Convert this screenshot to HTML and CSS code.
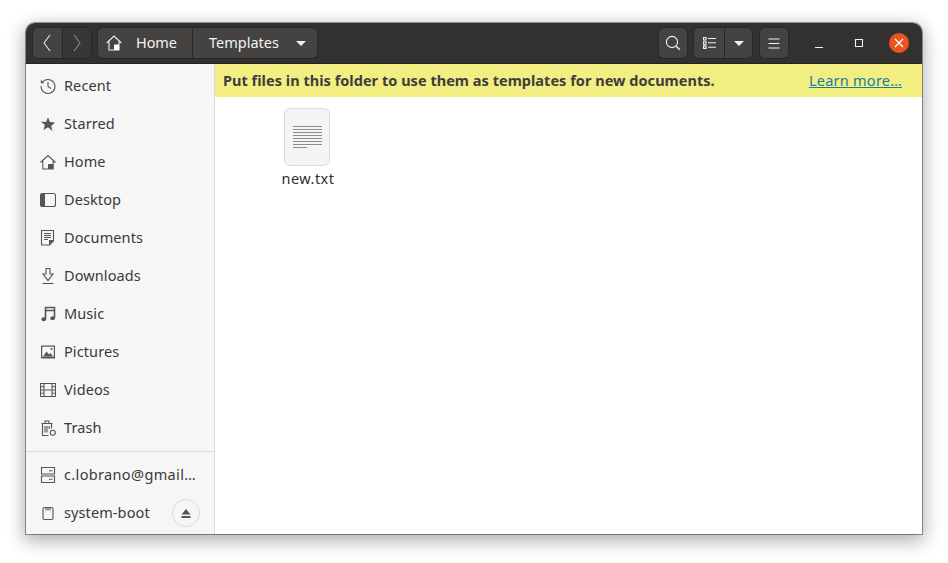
FILE: index.html
```html
<!DOCTYPE html>
<html lang="en">
<head>
<meta charset="utf-8">
<title>Templates</title>
<link rel="stylesheet" href="styles.css">
</head>
<body>
<div class="window">
  <header class="headerbar">
    <div class="group nav">
      <button class="btn nav-btn"><svg width="16" height="20" viewBox="0 0 16 20"><path d="M11 2 5 10l6 8" class="st-w"/></svg></button>
      <button class="btn nav-btn off"><svg width="16" height="20" viewBox="0 0 16 20"><path d="M5 2l6 8-6 8" class="st-g"/></svg></button>
    </div>
    <div class="group path">
      <button class="btn crumb home">
        <svg width="16" height="16" viewBox="0 0 16 16"><path d="M.7 8 8 1l7.300 7M3 6.500V15h10V6.500" class="st-w1"/><rect x="8" y="9.500" width="5" height="5.500" fill="#fff"/></svg>
        <span>Home</span>
      </button>
      <button class="btn crumb cur">
        <span>Templates</span>
        <i class="caret"></i>
      </button>
    </div>
    <div class="spacer"></div>
    <button class="btn solo"><svg width="16" height="16" viewBox="0 0 16 16"><circle cx="7" cy="7" r="5.600" class="st-w1"/><path d="m11.200 11.200 3.600 3.600" stroke="#eee" stroke-width="1.600" fill="none"/></svg></button>
    <div class="group view">
      <button class="btn view-a"><svg width="13" height="12" viewBox="0 0 13 12"><path d="M.5.5h2.500V3H.5zM.5 4.700h2.500v2.500H.5zM.5 8.900h2.500v2.500H.5z" class="st-w1"/><path d="M5 1.500h8M5 5.800h8M5 10.200h8" class="st-w1"/></svg></button>
      <button class="btn view-b"><i class="caret"></i></button>
    </div>
    <button class="btn solo menu"><svg width="12" height="11" viewBox="0 0 12 11"><path d="M.5 1h11M.5 5.500h11M.5 10h11" class="st-w1"/></svg></button>
    <div class="wm">
      <span class="wm-btn"><svg width="10" height="10" viewBox="0 0 10 10"><path d="M1 9.500h8" class="st-w1"/></svg></span>
      <span class="wm-btn"><svg width="10" height="10" viewBox="0 0 10 10"><path d="M1.500 1.500h7v7h-7z" class="st-w1"/></svg></span>
      <span class="wm-btn close"><svg width="10" height="10" viewBox="0 0 10 10"><path d="m1 1 8 8M9 1 1 9" stroke="#fff" stroke-width="1.300" fill="none"/></svg></span>
    </div>
  </header>
  <div class="body">
    <aside class="sidebar">
      <ul class="places">
        <li class="place"><svg class="ic" width="16" height="16" viewBox="0 0 16 16"><path d="M2.200 4.500A7 7 0 1 1 1 8" class="st-d"/><path d="M.8 1.800v3.400h3.400z" fill="#555"/><path d="M8 4v4.500l3 2" class="st-d"/></svg><span>Recent</span></li>
        <li class="place"><svg class="ic" width="16" height="16" viewBox="0 0 16 16"><path d="m8 1.200 2 4.900 5.200.4-4 3.400 1.300 5.100L8 11.200l-4.500 2.800 1.300-5.100-4-3.400L6 6.100z" fill="#555"/></svg><span>Starred</span></li>
        <li class="place"><svg class="ic" width="16" height="16" viewBox="0 0 16 16"><path d="M.5 8.500 8 1.500l7.500 7M2.800 6.500V15h10.400V6.500" class="st-d"/><rect x="8" y="10" width="5" height="5" fill="#555"/></svg><span>Home</span></li>
        <li class="place"><svg class="ic" width="16" height="16" viewBox="0 0 16 16"><rect x=".5" y="1.500" width="15" height="13" rx="2" class="st-d"/><path d="M2.500 1.500h2.500v13H2.500a2 2 0 0 1-2-2v-9a2 2 0 0 1 2-2z" fill="#555"/></svg><span>Desktop</span></li>
        <li class="place"><svg class="ic" width="16" height="16" viewBox="0 0 16 16"><path d="M1.500 .5h12v10.500l-4 4h-8z" class="st-d"/><path d="M4 3.500h7M4 5.500h7M4 7.500h7M4 9.500h4" class="st-d"/><path d="M9 15v-5h5z" fill="#555"/></svg><span>Documents</span></li>
        <li class="place"><svg class="ic" width="16" height="16" viewBox="0 0 16 16"><path d="M6 .5h4v5.500h3L8 12.500 3 6h3z" class="st-d"/><path d="M2.500 15.500h11" class="st-d"/></svg><span>Downloads</span></li>
        <li class="place"><svg class="ic" width="16" height="16" viewBox="0 0 16 16"><path d="M5.500 13V1.500h9V12M5.500 4.500h9" stroke="#555" stroke-width="1.600" fill="none"/><ellipse cx="3.800" cy="13.300" rx="2.300" ry="2" fill="#555"/><ellipse cx="12.600" cy="12.300" rx="2.300" ry="2" fill="#555"/></svg><span>Music</span></li>
        <li class="place"><svg class="ic" width="16" height="16" viewBox="0 0 16 16"><rect x="1" y="1.500" width="14" height="13" fill="#555"/><rect x="2.200" y="2.700" width="11.600" height="10" fill="#f6f6f6"/><path d="m3 12.500 3.500-5 2.500 3 1.500-1.500 2.500 3.500z" fill="#555"/><circle cx="11.500" cy="5" r="1" fill="#555"/></svg><span>Pictures</span></li>
        <li class="place"><svg class="ic" width="16" height="16" viewBox="0 0 16 16"><path d="M.5 1.500h15v13H.5zM4 1.500v13M12 1.500v13M4 8h8M.5 4.800H4M.5 8H4M.5 11.200H4M12 4.800h3.500M12 8h3.500M12 11.200h3.500" class="st-d"/></svg><span>Videos</span></li>
        <li class="place"><svg class="ic" width="16" height="16" viewBox="0 0 16 16"><path d="M1.500 3.500h11M5 3V1h4v2M2.500 3.500v12h6M11.500 3.500v5M5 6v6.500M7 6v6.500M9.200 6v3" class="st-d"/><circle cx="12.800" cy="12.800" r="2.500" class="st-d"/></svg><span>Trash</span></li>
      </ul>
      <ul class="places devices">
        <li class="place"><svg class="ic" width="16" height="16" viewBox="0 0 16 16"><path d="M1.500 .5h13v6.500h-13zM1.500 9h13v6.500h-13zM9 3.800h3.500M9 12.200h3.500" class="st-d"/></svg><span class="acct">c.lobrano@gmail…</span></li>
        <li class="place"><svg class="ic" width="16" height="16" viewBox="0 0 16 16"><path d="M4.500 2.500h7a1.500 1.500 0 0 1 1.500 1.500v9a1.500 1.500 0 0 1-1.500 1.500h-7A1.500 1.500 0 0 1 3 13V4a1.500 1.500 0 0 1 1.500-1.500z" class="st-d"/><path d="M6 3v2.500M8 3v2.500M10 3v2.500" class="st-d"/></svg><span class="grow">system-boot</span>
          <span class="eject"><svg width="10" height="9" viewBox="0 0 10 9"><path d="M5 0 9.500 5.500H.5z M.5 7h9v2h-9z" fill="#555"/></svg></span></li>
      </ul>
    </aside>
    <main class="main">
      <div class="infobar">
        <strong>Put files in this folder to use them as templates for new documents.</strong>
        <a class="learn" href="#">Learn more…</a>
      </div>
      <div class="files">
        <div class="file">
          <div class="page"><div class="lines"><i></i><i></i><i></i><i></i><i></i><i></i><i></i><i class="short"></i></div></div>
          <span class="fname">new.txt</span>
        </div>
      </div>
    </main>
  </div>
</div>
</body>
</html>
```
FILE: styles.css
```css
* { box-sizing: border-box; }
html, body { margin: 0; height: 100%; }
body {
  background: #fff;
  padding: 23px 26px 29px;
  font-family: "Noto Sans", "Open Sans", sans-serif;
  font-size: 14.5px;
  color: #3d3d3d;
  overflow: hidden;
}
button { font: inherit; color: inherit; margin: 0; padding: 0; border: 0; background: none; display: flex; align-items: center; justify-content: center; }
ul { list-style: none; margin: 0; padding: 0; }
i { display: block; }
.window {
  width: 896px;
  height: 511px;
  display: flex;
  flex-direction: column;
  border-radius: 9px 9px 0 0;
  overflow: hidden;
  box-shadow: 0 0 0 1px rgba(0,0,0,.38), 0 5px 18px 2px rgba(0,0,0,.32);
  background: #fff;
}
.headerbar {
  height: 41px;
  flex: none;
  background: #333130;
  border-bottom: 1px solid #232221;
  display: flex;
  align-items: flex-start;
  padding: 5px 0 0 7px;
  color: #f2f2f2;
}
.st-w { stroke: #e8e8e8; stroke-width: 1.1; fill: none; }
.st-g { stroke: #8a8a88; stroke-width: 1.1; fill: none; }
.st-w1 { stroke: #f2f2f2; stroke-width: 1.1; fill: none; }
.st-d { stroke: #555; stroke-width: 1.1; fill: none; }
.group { display: flex; height: 30px; border-radius: 5px; box-shadow: 0 0 0 1px #292827; overflow: hidden; }
.btn { height: 30px; background: #454342; }
.nav { width: 58px; }
.nav-btn { flex: 1; }
.nav-btn + .nav-btn { border-left: 1px solid #2a2928; }
.nav-btn.off { background: #393736; }
.path { margin-left: 7px; width: 219px; }
.crumb span { margin-top: -2px; }
.home { width: 94px; justify-content: flex-start; padding-left: 8px; }
.home span { margin-left: 14px; letter-spacing: -.1px; }
.cur { flex: 1; border-left: 1px solid #2a2928; justify-content: flex-start; padding-left: 16px; }
.cur .caret { margin-left: 17px; }
.caret { width: 0; height: 0; border-left: 5px solid transparent; border-right: 5px solid transparent; border-top: 5px solid #f2f2f2; }
.spacer { flex: 1; }
.solo { width: 28px; border-radius: 5px; box-shadow: 0 0 0 1px #292827; }
.view { width: 58px; margin-left: 7px; }
.view-a { width: 30px; }
.view-b { flex: 1; border-left: 1px solid #2a2928; }
.menu { margin-left: 8px; }
.wm { display: flex; width: 134px; padding-left: 21px; align-items: center; height: 30px; gap: 20px; }
.wm-btn { width: 20px; height: 20px; display: flex; align-items: center; justify-content: center; border-radius: 50%; }
.close { background: #e95420; }
.body { flex: 1; min-height: 0; display: flex; }
.sidebar {
  width: 189px;
  flex: none;
  background: #f6f6f6;
  border-right: 1px solid #d9d9d9;
  display: flex;
  flex-direction: column;
  padding-top: 3px;
}
.places { display: flex; flex-direction: column; }
.devices { margin-top: 4px; border-top: 1px solid #dbdbdb; padding-top: 4px; }
.place { height: 38px; display: flex; align-items: center; padding-left: 14px; color: #3a3a3a; letter-spacing: .1px; }
.place span { margin-top: -2px; }
.place .acct { letter-spacing: .35px; white-space: nowrap; }
.ic { flex: none; margin-right: 8px; }
.grow { flex: 1; min-width: 0; white-space: nowrap; }
.place .eject { flex: none; margin-top: 0; width: 28px; height: 28px; margin-right: 14px; border-radius: 50%; border: 1px solid #dcdcdc; display: flex; align-items: center; justify-content: center; }
.main { flex: 1; min-width: 0; display: flex; flex-direction: column; }
.infobar {
  height: 33px;
  flex: none;
  background: #f3ee82;
  display: flex;
  align-items: center;
  justify-content: space-between;
  padding: 0 20px 0 8px;
}
.infobar strong { font-weight: 700; font-size: 14.5px; letter-spacing: .03px; color: #3d3d3d; margin-top: -2px; }
.learn { color: #19809c; text-decoration: underline; font-size: 14.5px; letter-spacing: .25px; margin-top: -2px; }
.files { flex: 1; padding: 11px 0 0 60px; }
.file { width: 64px; display: flex; flex-direction: column; align-items: center; }
.page {
  width: 46px; height: 58px;
  background: #f4f4f4;
  border: 1px solid #dcdcdc;
  border-radius: 6px;
  display: flex;
  justify-content: center;
  padding-top: 17px;
}
.lines { width: 29px; display: flex; flex-direction: column; gap: 2px; }
.lines i { height: 1px; background: #8d8d8d; }
.lines i.short { width: 14px; }
.fname { margin: 2px 0 0 2px; color: #2e2e2e; letter-spacing: .45px; white-space: nowrap; }
```
